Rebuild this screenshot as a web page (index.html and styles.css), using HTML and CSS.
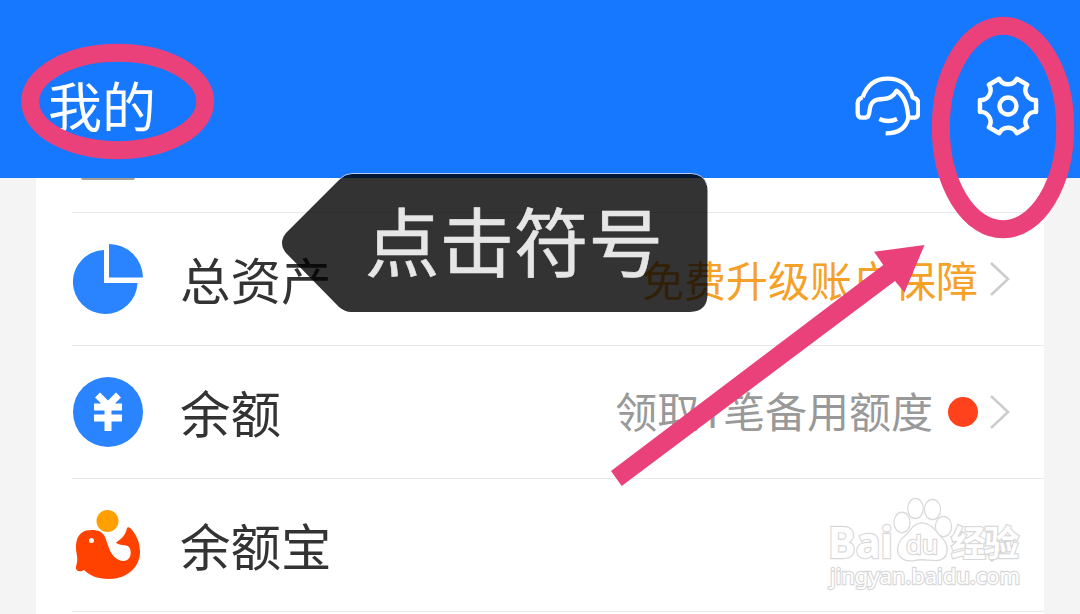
FILE: index.html
```
<!DOCTYPE html>
<html lang="zh-CN">
	<head>
		<meta charset="utf-8"/>
		<title>我的</title>
		<link rel="stylesheet" href="styles.css">
	</head>
	<body>
		<div class="header flex">
			<div class="titulo">我的</div>
			<div class="icons flex">
				<svg class="headset" width="65" height="62" viewBox="45 225 195 186">
					<path d="M68 292C82 252 108 236 143 236C180 236 208 255 218 292Q235 297 235 310V338Q235 353 220 353H205C202 315 194 290 170 272C160 290 148 297 130 297C105 297 92 304 89 330C88 346 85 353 76 353H67Q53 353 53 338V310Q53 296 68 292"/>
					<path d="M205 353C198 384 175 400 137 400M118 357Q145 369 171 357"/>
				</svg>
				<svg class="gear" width="64" height="64" viewBox="-33 -33 66 66">
					<path d="M-9.1-28.1C-5.5-20.5 5.5-20.5 9.1-28.1L19.7-21.9C15-15 20.5-5.5 28.9-6.1L28.9 6.1C20.5 5.5 15 15 19.7 21.9L9.1 28.1C5.5 20.5-5.5 20.5-9.1 28.1L-19.7 21.9C-15 15-20.5 5.5-28.9 6.1L-28.9-6.1C-20.5-5.5-15-15-19.7-21.9Z"/>
					<circle r="8.7"/>
				</svg>
			</div>
		</div>

		<div class="lista">
			<div class="row-top"><div class="resto"></div></div>
			<div class="row flex">
				<svg class="icon" width="70" height="70" viewBox="0 0 70 70">
					<path fill="#2b84ff" d="M31 6V39H64.500A32.300 32 0 1 1 31 6ZM36 0A34 34 0 0 1 70 33.500H36Z"/>
				</svg>
				<div class="nome">总资产</div>
				<div class="info laranja">免费升级账户保障</div>
				<svg class="seta" width="22" height="36" viewBox="0 0 22 36"><path d="M2 2L19 18L2 34"/></svg>
			</div>
			<div class="row flex">
				<svg class="icon" width="70" height="70" viewBox="0 0 70 70">
					<circle cx="35" cy="35" r="35" fill="#2b84ff"/>
					<path d="M24.500 18L35 28.500L45.500 18M35 28V54M21 30H49M21 41H49" fill="none" stroke="#fff" stroke-width="7"/>
				</svg>
				<div class="nome">余额</div>
				<div class="info">领取<span class="num">1</span>笔备用额度</div>
				<div class="ponto"></div>
				<svg class="seta" width="22" height="36" viewBox="0 0 22 36"><path d="M2 2L19 18L2 34"/></svg>
			</div>
			<div class="row flex">
				<svg class="icon" width="70" height="70" viewBox="0 0 70 70">
					<circle cx="34.500" cy="11" r="11" fill="#ff9f00"/>
					<path fill="#ff4200" d="M13 20.500C21 19 29 20 32 27C35 34 36 42 42 47.500C46 51 51 52 54 50C58 48 59 41 56 37C53 34 46 36 43 32.500C49 29 53 24 54 18C55 16 58 18 59 20C64 26 67 33 67 42C67 57 54 69 36 69C24 69 16 65 11 60C8 62 3 62 3 58C3 54 5 53 4 46C1 31 5 23 13 20.500Z"/>
					<circle cx="18.500" cy="30.500" r="2.500" fill="#fff"/>
				</svg>
				<div class="nome">余额宝</div>
				<svg class="seta" width="22" height="36" viewBox="0 0 22 36"><path d="M2 2L19 18L2 34"/></svg>
			</div>
		</div>

		<div class="callout">
			<svg width="427" height="140" viewBox="281 173 427 140">
				<path class="fundo" d="M352 173.500H691Q707.500 174 707.500 191V294Q707.500 311.500 690 312H351Q345 312 339 307L286 253Q278 243 286 233L339 180Q345 174 352 173.500Z"/>
				<path class="brilho" d="M339 179.500Q345 173.500 352 173.500H691Q704 174 707 185"/>
			</svg>
			<span>点击符号</span>
		</div>

		<svg class="marcas" width="1080" height="614" viewBox="0 0 1080 614">
			<ellipse cx="117.700" cy="101.500" rx="87.500" ry="48.700"/>
			<ellipse cx="1003" cy="127.500" rx="62.200" ry="101.800"/>
			<polygon points="611,471 621.700,486 895,281 904.500,292.500 924.500,245 874,251.700 883.300,265"/>
		</svg>

		<svg class="marca-dagua" width="210" height="100" viewBox="820 495 210 100">
			<text x="828" y="558" font-size="43" font-weight="700" textLength="65" lengthAdjust="spacingAndGlyphs">Bai</text>
			<ellipse cx="902" cy="522.500" rx="7.500" ry="9.700"/>
			<ellipse cx="915.500" cy="508.500" rx="7.200" ry="9.500"/>
			<ellipse cx="932.500" cy="509.500" rx="7.500" ry="9.500"/>
			<ellipse cx="943.500" cy="526.500" rx="7.500" ry="9.500"/>
			<path d="M922 523.500C932 524 936 533 943 540C949 547 948 560 936 560C928 560 922 558 914 560C902 562 896 554 899 545C901 538 907 536 911 530Q915 524 922 523.500Z"/>
			<text x="906" y="554" font-size="26" textLength="32" lengthAdjust="spacingAndGlyphs">du</text>
			<text class="cjk" x="951" y="556" font-size="35" font-weight="700" textLength="68">经验</text>
			<text x="830" y="584" font-size="22" textLength="190">jingyan.baidu.com</text>
		</svg>
	</body>
</html>
```
FILE: styles.css
```
html, body {
	width: 1080px; height: 614px;
	padding: 0; border: 0; margin: 0;
	overflow: hidden;
	background: #f4f4f4;
	font-family: "Noto Sans CJK SC", sans-serif;
}
body {
	position: relative;
}
.flex {
	display: flex;
	align-items: center;
}
.header {
	height: 178px;
	padding: 34px 40px 0 48px;
	box-sizing: border-box;
	justify-content: space-between;
	background: #1677ff;
	color: #fff;
}
.titulo {
	padding-bottom: 2px;
	font-size: 54px;
	line-height: 72px;
}
.icons {
	gap: 56px;
}
.icons path, .icons circle {
	fill: none;
	stroke: #fff;
	stroke-width: 4.6;
	stroke-linejoin: round;
}
.icons .headset path {
	stroke-width: 13;
}
.lista {
	height: 436px;
	margin: 0 36px;
	padding-left: 36px;
	background: #fff;
}
.row-top, .row {
	box-sizing: border-box;
	border-bottom: 1px solid #e8e8e8;
}
.row-top {
	height: 35px;
}
.resto {
	width: 54px;
	height: 2px;
	margin-left: 9px;
	background: #a8a294;
	border-radius: 0 0 3px 3px;
}
.row {
	height: 133px;
	padding-right: 33px;
}
.icon {
	margin-left: 1px;
}
.nome {
	flex: 1;
	margin-left: 37px;
	padding-bottom: 3px;
	color: #333;
	font-size: 50.5px;
	line-height: 70px;
}
.info {
	color: #999;
	font-size: 42px;
	line-height: 60px;
}
.num {
	font-family: Roboto, sans-serif;
}
.laranja {
	color: #f5a127;
}
.ponto {
	width: 30px;
	height: 30px;
	margin-left: 15px;
	border-radius: 50%;
	background: #ff411c;
}
.seta {
	margin-left: 11px;
}
.seta path {
	fill: none;
	stroke: #ccc;
	stroke-width: 2.5;
}
.callout {
	position: absolute;
	left: 281px;
	top: 173px;
	width: 427px;
	height: 140px;
}
.callout span {
	position: absolute;
	left: 84px;
	top: 14px;
	color: #e6e6e6;
	font-size: 74.5px;
	line-height: 104px;
	white-space: nowrap;
	-webkit-text-stroke: 0.6px #e6e6e6;
}
.fundo {
	fill: rgba(0, 0, 0, .8);
}
.brilho {
	fill: none;
	stroke: #b5cdf0;
}
.marcas {
	position: absolute;
	left: 0;
	top: 0;
}
.marcas ellipse {
	fill: none;
	stroke: #eb417b;
	stroke-width: 18;
}
.marcas polygon {
	fill: #eb417b;
}
.marca-dagua {
	position: absolute;
	left: 820px;
	top: 495px;
	fill: #fff;
	stroke: #d8d8d8;
	stroke-width: 2.4;
	paint-order: stroke;
	font-family: "Noto Sans", sans-serif;
}
.marca-dagua .cjk {
	font-family: "Noto Sans CJK SC", sans-serif;
}
```
